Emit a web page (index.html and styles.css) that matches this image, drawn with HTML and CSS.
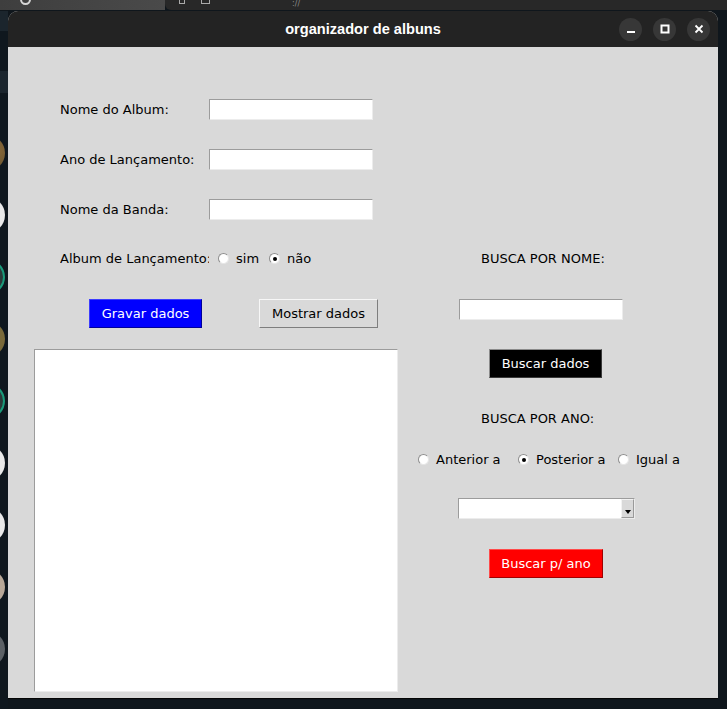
FILE: index.html
```html
<!DOCTYPE html>
<html lang="pt">
<head>
<meta charset="utf-8">
<title>organizador de albuns</title>
<link rel="stylesheet" href="styles.css">
</head>
<body>
<div class="screen">
  <div class="topbar">
    <div class="tb-left"><span class="tb-icon"></span></div>
    <div class="tb-right">
      <span class="tb-glyph g1"></span>
      <span class="tb-glyph g2"></span>
      <span class="tb-url">://</span>
    </div>
  </div>
  <div class="desk">
    <div class="sidebar">
      <div class="sb-block top"></div>
      <div class="sb-block mid"></div>
      <span class="avatar a1"></span>
      <span class="avatar a2"></span>
      <span class="avatar a3"></span>
      <span class="avatar a4"></span>
      <span class="avatar a3"></span>
      <span class="avatar a2"></span>
      <span class="avatar a2"></span>
      <span class="avatar a5"></span>
      <span class="avatar a6"></span>
    </div>
    <div class="window">
      <div class="titlebar">
        <span class="title">organizador de albuns</span>
        <div class="controls">
          <span class="ctl"><svg width="10" height="10" viewBox="0 0 10 10"><rect x="1" y="7" width="8" height="2" fill="#fff"/></svg></span>
          <span class="ctl"><svg width="10" height="10" viewBox="0 0 10 10"><rect x="1.5" y="1.5" width="7" height="7" fill="none" stroke="#fff" stroke-width="2"/></svg></span>
          <span class="ctl"><svg width="10" height="10" viewBox="0 0 10 10"><path d="M1.5 1.5 L8.5 8.5 M8.5 1.5 L1.5 8.5" stroke="#fff" stroke-width="1.8"/></svg></span>
        </div>
      </div>
      <div class="content">
        <div class="col-left">
          <div class="field-row">
            <span class="label">Nome do Album:</span>
            <span class="entry"></span>
          </div>
          <div class="field-row">
            <span class="label">Ano de Lançamento:</span>
            <span class="entry"></span>
          </div>
          <div class="field-row">
            <span class="label">Nome da Banda:</span>
            <span class="entry"></span>
          </div>
          <div class="field-row radio-row">
            <span class="label">Album de Lançamento:</span>
            <div class="radios-left">
              <span class="radio"><span class="ind"></span>sim</span>
              <span class="radio"><span class="ind on"></span>não</span>
            </div>
          </div>
          <div class="btn-row">
            <span class="btn btn-blue">Gravar dados</span>
            <span class="btn btn-gray">Mostrar dados</span>
          </div>
          <div class="listbox"></div>
        </div>
        <div class="col-right">
          <div class="r-title">BUSCA POR NOME:</div>
          <span class="entry r-entry"></span>
          <span class="btn btn-black r-btn">Buscar dados</span>
          <div class="r-title r-title2">BUSCA POR ANO:</div>
          <div class="r-radios">
            <span class="radio fixed"><span class="ind"></span>Anterior a</span>
            <span class="radio fixed"><span class="ind on"></span>Posterior a</span>
            <span class="radio"><span class="ind"></span>Igual a</span>
          </div>
          <div class="combo">
            <span class="combo-field"></span>
            <span class="combo-btn"><span class="tri"></span></span>
          </div>
          <span class="btn btn-red r-btn2">Buscar p/ ano</span>
        </div>
      </div>
    </div>
  </div>
</div>
</body>
</html>
```

FILE: styles.css
```css
* { box-sizing: border-box; }

html, body {
  margin: 0;
  padding: 0;
  background: #0f161c;
}

.screen {
  width: 727px;
  height: 709px;
  overflow: hidden;
  background: #0f161c;
  font-family: "DejaVu Sans", sans-serif;
  font-size: 13px;
  color: #000;
}

/* ---------- top strip ---------- */
.topbar {
  display: flex;
  height: 10px;
}
.tb-left {
  width: 165px;
  background: linear-gradient(90deg, #3e3e3e, #4a4a4a);
  position: relative;
}
.tb-icon {
  position: absolute;
  left: 20px;
  top: -6px;
  width: 11px;
  height: 11px;
  border: 2px solid #d6d6d6;
  border-radius: 50%;
}
.tb-right {
  flex: 1;
  background: #282828;
  border-bottom-left-radius: 6px;
  display: flex;
  align-items: flex-start;
  gap: 16px;
  padding-left: 14px;
}
.tb-glyph {
  display: block;
  width: 6px;
  height: 4px;
  border: 1.5px solid #aaa;
  border-top: none;
}
.g2 { width: 9px; }
.tb-url {
  color: #8a8a8a;
  font-size: 8px;
  line-height: 8px;
  margin-left: 66px;
}

/* ---------- desktop ---------- */
.desk {
  display: flex;
  height: 699px;
  padding-top: 1px;
}
.sidebar {
  width: 8px;
  height: 698px;
  overflow: hidden;
  background: #0f171e;
  display: flex;
  flex-direction: column;
}
.sb-block {
  flex: none;
  width: 8px;
  background: #1b252d;
}
.sb-block.top { height: 20px; }
.sb-block.mid { height: 22px; margin-top: 40px; }
.avatar {
  flex: none;
  display: block;
  width: 36px;
  height: 36px;
  border-radius: 50%;
  margin-left: -31px;
  margin-top: 26px;
}
.a1 { background: radial-gradient(circle at 70% 40%, #8a6a3a, #5a4a2a); margin-top: 42px; }
.a2 { background: #e9e9e9; }
.a3 { background: #2c3a3a; border: 2px solid #1a9a7a; }
.a4 { background: #7a6a3a; }
.a5 { background: #b8a898; }
.a6 { background: #5c6166; }

/* ---------- window ---------- */
.window {
  width: 710px;
  height: 688px;
  flex: none;
  background: #d9d9d9;
  border-radius: 10px 10px 0 0;
  border-bottom: 1px solid #050505;
  overflow: hidden;
  display: flex;
  flex-direction: column;
}
.titlebar {
  height: 36px;
  flex: none;
  background: #232323;
  display: grid;
  grid-template-columns: 1fr auto 1fr;
  align-items: center;
}
.title {
  grid-column: 2;
  color: #fff;
  font-family: "Liberation Sans", "DejaVu Sans", sans-serif;
  font-weight: bold;
  font-size: 14.6px;
}
.controls {
  grid-column: 3;
  justify-self: end;
  display: flex;
  gap: 11px;
  padding-right: 8px;
}
.ctl {
  width: 23px;
  height: 23px;
  border-radius: 50%;
  background: #373737;
  display: flex;
  align-items: center;
  justify-content: center;
}
.ctl svg { display: block; }

.content {
  flex: 1;
  display: flex;
  background: #d9d9d9;
}

/* ---------- left column ---------- */
.col-left {
  width: 402px;
  flex: none;
  padding-top: 52px;
}
.field-row {
  display: flex;
  align-items: center;
  height: 21px;
  margin-bottom: 29px;
  margin-left: 52px;
}
.label {
  width: 149px;
  flex: none;
  white-space: nowrap;
  overflow: hidden;
}
.entry {
  display: block;
  width: 164px;
  height: 21px;
  background: #fff;
  border: 1px solid;
  border-color: #9c9c9c #ececec #ececec #9c9c9c;
}
.radio-row {
  height: 19px;
  margin-bottom: 0;
}
.radios-left {
  display: flex;
  margin-left: 9px;
}
.radio {
  display: flex;
  align-items: center;
  gap: 7px;
  white-space: nowrap;
}
.radios-left .radio + .radio { margin-left: 10px; }
.ind {
  width: 11px;
  height: 11px;
  border-radius: 50%;
  background: #fff;
  border: 1px solid;
  border-color: #8e8e8e #e6e6e6 #e6e6e6 #8e8e8e;
  display: flex;
  align-items: center;
  justify-content: center;
}
.ind.on::after {
  content: "";
  width: 4px;
  height: 4px;
  border-radius: 50%;
  background: #000;
}

.btn-row {
  display: flex;
  margin-top: 31px;
}
.btn {
  display: flex;
  align-items: center;
  justify-content: center;
  height: 29px;
  border: 1px solid;
  white-space: nowrap;
}
.btn-blue {
  margin-left: 81px;
  width: 113px;
  background: #0000ff;
  color: #fff;
  border-color: #3b3bff #00009a #00009a #3b3bff;
}
.btn-gray {
  margin-left: 57px;
  width: 119px;
  background: #d9d9d9;
  color: #000;
  border-color: #f7f7f7 #7e7e7e #7e7e7e #f7f7f7;
}
.listbox {
  margin-top: 21px;
  margin-left: 26px;
  width: 364px;
  height: 343px;
  background: #fff;
  border: 1px solid;
  border-color: #9c9c9c #ececec #ececec #9c9c9c;
}

/* ---------- right column ---------- */
.col-right {
  flex: 1;
  padding-top: 201px;
  display: flex;
  flex-direction: column;
  align-items: flex-start;
}
.r-title {
  height: 21px;
  line-height: 21px;
  margin-left: 71px;
  white-space: nowrap;
}
.r-entry {
  margin-top: 30px;
  margin-left: 49px;
}
.btn-black {
  background: #000;
  color: #fff;
  border-color: #8a8a8a #3a3a3a #3a3a3a #8a8a8a;
}
.r-btn {
  margin-top: 29px;
  margin-left: 79px;
  width: 113px;
}
.r-title2 { margin-top: 30px; }
.r-radios {
  display: flex;
  height: 21px;
  align-items: center;
  margin-top: 20px;
  margin-left: 8px;
}
.radio.fixed { width: 100px; }
.combo {
  display: flex;
  margin-top: 28px;
  margin-left: 48px;
  width: 177px;
  height: 21px;
  background: #fff;
  border: 1px solid;
  border-color: #9c9c9c #ececec #ececec #9c9c9c;
}
.combo-field { flex: 1; }
.combo-btn {
  width: 13px;
  background: #d9d9d9;
  border: 1px solid;
  border-color: #f2f2f2 #9a9a9a #9a9a9a #f2f2f2;
  display: flex;
  align-items: flex-end;
  justify-content: center;
  padding-bottom: 3px;
}
.tri {
  width: 0;
  height: 0;
  border-left: 3px solid transparent;
  border-right: 3px solid transparent;
  border-top: 4px solid #000;
}
.btn-red {
  background: #ff0000;
  color: #fff;
  border-color: #ff4a4a #a00000 #a00000 #ff4a4a;
}
.r-btn2 {
  margin-top: 30px;
  margin-left: 79px;
  width: 114px;
}
```
